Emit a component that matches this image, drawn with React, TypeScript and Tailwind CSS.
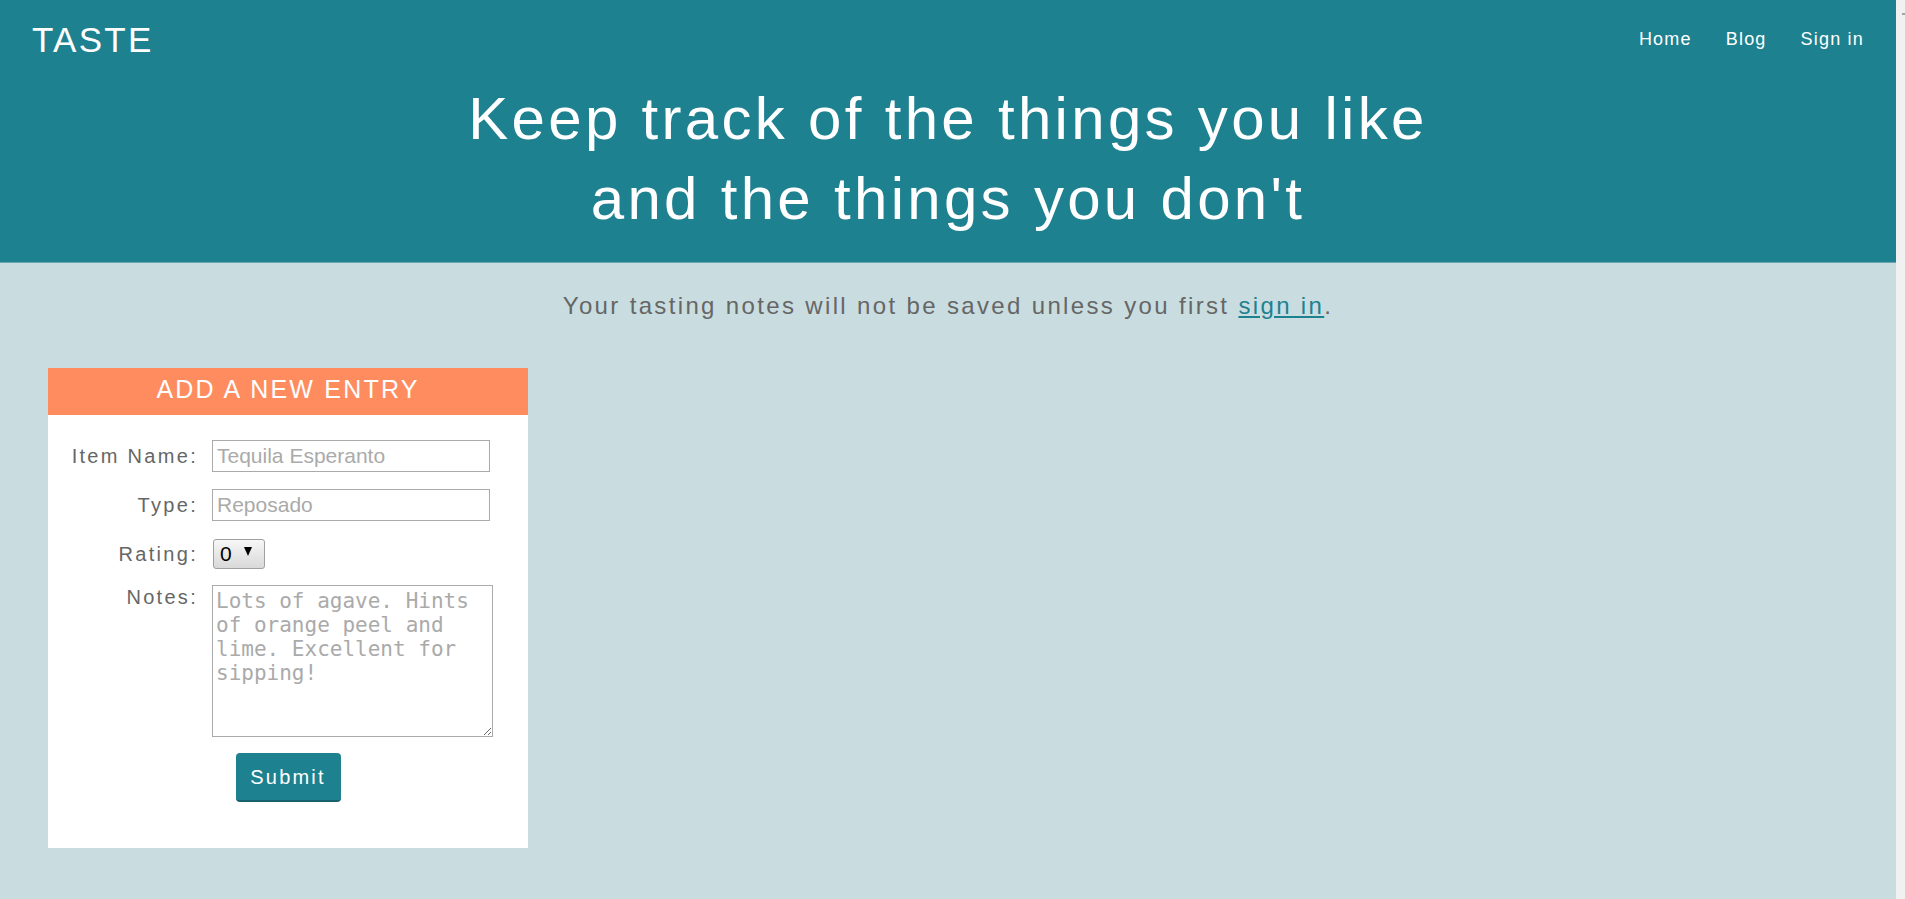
const navLinks = ["Home", "Blog", "Sign in"];

const App = () => {
  return (
    <div className="flex h-[899px] w-full overflow-hidden font-['Liberation_Sans',Arial,sans-serif]">
      <div className="min-w-0 flex-1 bg-[#c9dde0]">
        <header className="border-b border-[#6ba6ae] bg-[#1e8190] pb-[23px] text-white">
          <div className="flex items-start justify-between px-8 pt-[22px]">
            <a href="#" className="text-[35px] leading-none tracking-[2.3px]">
              TASTE
            </a>
            <nav className="mt-[8px] flex gap-[34px] text-[18px] leading-none tracking-[1.2px]">
              {navLinks.map((link) => (
                <a key={link} href="#">
                  {link}
                </a>
              ))}
            </nav>
          </div>
          <h1 className="mt-[22px] text-center text-[60px] font-normal leading-[80px] tracking-[3.3px]">
            Keep track of the things you like
            <br />
            and the things you don't
          </h1>
        </header>

        <p className="mt-[31px] text-center text-[24px] leading-none tracking-[2.35px] text-[#666]">
          Your tasting notes will not be saved unless you first{" "}
          <a href="#" className="text-[#1e8190] underline">
            sign in
          </a>
          .
        </p>

        <div className="ml-[48px] mt-[50px] h-[480px] w-[480px] bg-white">
          <div className="flex h-[47px] items-center justify-center bg-[#ff8c5f] pb-[4px] text-[25px] tracking-[2.2px] text-white">
            ADD A NEW ENTRY
          </div>

          <form className="pt-[25px]" onSubmit={(e) => e.preventDefault()}>
            <div className="flex items-center">
              <label className="w-[150px] text-right text-[20px] tracking-[2.3px] text-[#666]">Item Name:</label>
              <input
                className="ml-[14px] h-[32px] w-[278px] border border-[#aaa] px-[4px] text-[21px] placeholder:text-[#aaa]"
                placeholder="Tequila Esperanto"
              />
            </div>

            <div className="mt-[17px] flex items-center">
              <label className="w-[150px] text-right text-[20px] tracking-[2.3px] text-[#666]">Type:</label>
              <input
                className="ml-[14px] h-[32px] w-[278px] border border-[#aaa] px-[4px] text-[21px] placeholder:text-[#aaa]"
                placeholder="Reposado"
              />
            </div>

            <div className="mt-[18px] flex items-center">
              <label className="w-[150px] text-right text-[20px] tracking-[2.3px] text-[#666]">Rating:</label>
              <div className="ml-[15px] flex h-[30px] w-[52px] items-center rounded-[3px] border border-[#a0a0a0] bg-gradient-to-b from-[#f7f7f7] to-[#d9d9d9] pl-[6px] text-[21px] text-black">
                <span>0</span>
                <svg className="ml-[12px] -mt-[5px]" width="8" height="9" viewBox="0 0 8 9">
                  <polygon points="0,0 8,0 4,9" fill="#000" />
                </svg>
              </div>
            </div>

            <div className="mt-[16px] flex items-start">
              <label className="w-[150px] text-right text-[20px] leading-[24px] tracking-[2.3px] text-[#666]">Notes:</label>
              <textarea
                className="ml-[14px] h-[152px] w-[281px] border border-[#aaa] p-[3px] font-['DejaVu_Sans_Mono',monospace] text-[21px] leading-[24px] placeholder:text-[#aaa]"
                placeholder="Lots of agave. Hints of orange peel and lime. Excellent for sipping!"
              />
            </div>

            <button
              type="submit"
              className="mx-auto mt-[16px] block h-[49px] w-[105px] rounded-[4px] border-b-2 border-[#16616c] bg-[#1e8190] text-[20px] tracking-[2.2px] text-white"
            >
              Submit
            </button>
          </form>
        </div>
      </div>

      <div className="w-[9px] shrink-0 bg-[#f1f1f1] pl-[6px] pt-[13px]">
        <div className="h-[2px] w-[3px] bg-[#a3a3a3]" />
      </div>
    </div>
  );
};

export default App;
